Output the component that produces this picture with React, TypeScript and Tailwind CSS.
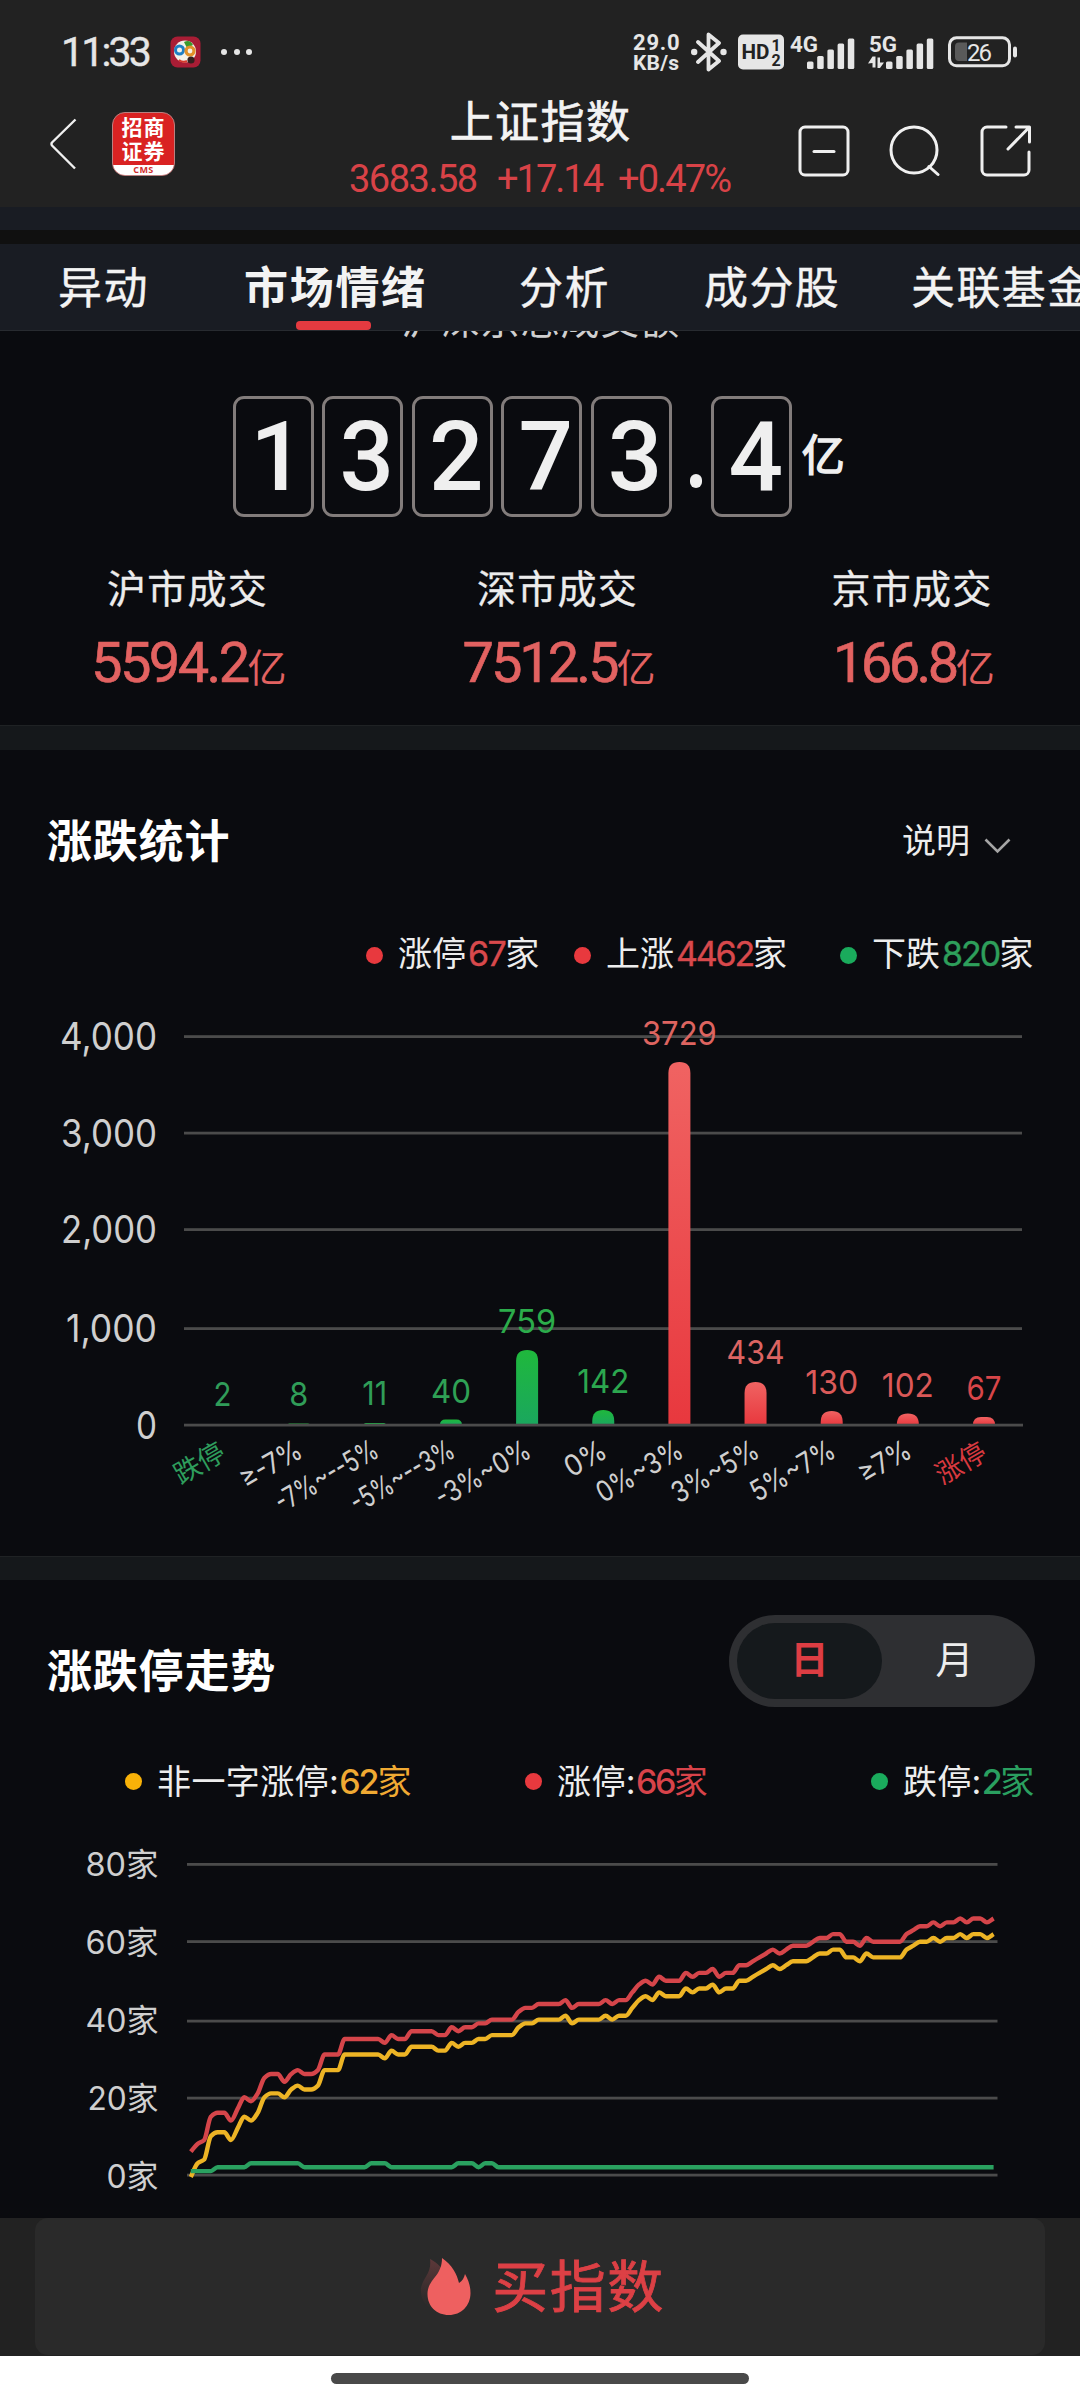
import React from "react";

const GRID = "#4b4b4b";
const LABEL = "#cfcfcf";
const CHART_FONT = "Inter, 'Noto Sans CJK SC', sans-serif";

/* ---------- status bar ---------- */

function AppBadge() {
  return (
    <svg width="31" height="32" viewBox="0 0 31 32">
      <rect x="0.5" y="0.5" width="30" height="31" rx="7" fill="#a91d35" />
      <circle cx="15" cy="15.5" r="11" fill="#f4f1e8" />
      <path d="M14 6q6-3 9 3l-6 3z" fill="#3a9a2c" />
      <circle cx="9.5" cy="14" r="4" fill="none" stroke="#1f7fc4" strokeWidth="3" />
      <circle cx="20" cy="15" r="4" fill="none" stroke="#e2912a" strokeWidth="3.2" />
      <path d="M9 24q4 3 8 1" fill="none" stroke="#d63a2d" strokeWidth="2" />
      <circle cx="21" cy="24" r="3.6" fill="#33201f" />
    </svg>
  );
}

function Bluetooth() {
  return (
    <svg width="36" height="40" viewBox="0 0 36 40" fill="none" stroke="#e6e6e6" strokeWidth="3.8">
      <path d="M7 10l21 19L17.500 37.500V2.500L28 11 7 30" strokeLinejoin="round" strokeLinecap="round" />
      <circle cx="3.200" cy="20" r="3.200" fill="#e6e6e6" stroke="none" />
      <circle cx="32.500" cy="20" r="3.200" fill="#e6e6e6" stroke="none" />
    </svg>
  );
}

function HdBadge() {
  return (
    <svg width="46" height="36" viewBox="0 0 46 36" fontFamily="Roboto, sans-serif" fontWeight="700" fill="#222">
      <rect width="46" height="35" y="0.5" rx="5" fill="#e6e6e6" />
      <text x="3.500" y="25" fontSize="20" textLength="28" lengthAdjust="spacingAndGlyphs">HD</text>
      <text x="33.500" y="17" fontSize="16">1</text>
      <text x="33.500" y="32" fontSize="16">2</text>
    </svg>
  );
}

function Signal({ label, arrows }: { label: string; arrows?: boolean }) {
  const bars = [7.5, 13, 19.5, 25.5, 30.5];
  return (
    <svg width="66" height="36" viewBox="0 0 66 36" fill="#e6e6e6">
      <text x={arrows ? 1 : 0} y="17.500" fontSize="22" fontWeight="700" fontFamily="Roboto, sans-serif" textLength="28" lengthAdjust="spacingAndGlyphs">
        {label}
      </text>
      {bars.map((h, i) => (
        <rect key={h} x={(arrows ? 18 : 17) + i * 10.2} y={35 - h} width="6.500" height={h} rx="1.500" />
      ))}
      {arrows && (
        <path d="M4.500 22.500h3v11h-3v-4.500L0 29.500zM9.500 34v-10.500h2.500V28.500h4L12 34z" />
      )}
    </svg>
  );
}

function Battery() {
  return (
    <svg width="70" height="32" viewBox="0 0 70 32">
      <rect x="1.500" y="1.800" width="60" height="28" rx="7" fill="none" stroke="#e6e6e6" strokeWidth="3" />
      <path d="M11 6.500h8v18.500h-8a4 4 0 0 1-4-4v-10.500a4 4 0 0 1 4-4z" fill="#5a5a5a" />
      <rect x="65" y="10.500" width="4" height="11" rx="2" fill="#e6e6e6" />
      <text x="31.500" y="24.500" textAnchor="middle" fontSize="24" fontFamily="Roboto, sans-serif" fill="#e6e6e6" textLength="25">26</text>
    </svg>
  );
}

function StatusBar() {
  return (
    <div className="flex h-[104px] items-center pr-[62px] pl-[61px] text-[#e6e6e6]">
      <span className="w-[109px] text-[41px] leading-none tracking-[-2.800px] [-webkit-text-stroke:0.4px]">11:33</span>
      <AppBadge />
      <div className="ml-[20px] flex gap-[6.500px]">
        <i className="size-[6px] rounded-full bg-[#e6e6e6]" />
        <i className="size-[6px] rounded-full bg-[#e6e6e6]" />
        <i className="size-[6px] rounded-full bg-[#e6e6e6]" />
      </div>
      <div className="ml-auto flex items-center">
        <div className="w-[58px] pt-[2px] text-[21px] leading-[20px] font-bold">
          <div className="text-[22px] tracking-[0.800px]">29.0</div>
          <div className="tracking-[0.200px]">KB/s</div>
        </div>
        <Bluetooth />
        <div className="ml-[11px]"><HdBadge /></div>
        <div className="ml-[6px]"><Signal label="4G" /></div>
        <div className="ml-[12px]"><Signal label="5G" arrows /></div>
        <div className="ml-[14px]"><Battery /></div>
      </div>
    </div>
  );
}

/* ---------- title bar ---------- */

function BrokerLogo() {
  return (
    <div className="flex h-[64px] w-[63px] flex-col overflow-hidden rounded-[13px] border border-[#b98080] bg-[#d92222] text-white">
      <div className="flex h-[52px] flex-col items-center justify-center pt-px text-[21px] leading-[24px] font-bold tracking-[1px]">
        <div>招商</div>
        <div>证券</div>
      </div>
      <div className="flex flex-1 items-center justify-center bg-white pb-px font-['Open_Sans'] text-[9px] leading-none font-bold tracking-[0.4px] text-[#d03030]">CMS</div>
    </div>
  );
}

function TitleBar() {
  return (
    <div className="grid h-[103px] grid-cols-[340px_401px_339px]">
      <div className="flex pt-[8px] pl-[50px]">
        <svg className="mt-[6px]" width="27" height="52" viewBox="0 0 27 52" fill="none" stroke="#f0f0f0" strokeWidth="2.400" strokeLinejoin="round">
          <path d="M25.500 1.500L2 24.500q-1 1.500 0 3L25 50.500" />
        </svg>
        <div className="ml-[35px]"><BrokerLogo /></div>
      </div>
      <div className="flex flex-col items-center">
        <h1 className="-mt-[9px] text-[44px] leading-[56px] tracking-[1.400px] text-[#f3f3f3] [-webkit-text-stroke:0.7px]">上证指数</h1>
        <div className="mt-[8px] flex text-[38px] leading-[40px] text-[#d84247]">
          <span className="w-[148px] tracking-[-1.500px]">3683.58</span>
          <span className="w-[121px] tracking-[-2px]">+17.14</span>
          <span className="w-[114px] tracking-[-1.900px]">+0.47%</span>
        </div>
      </div>
      <div className="flex pt-[21px] pl-[57px]">
        <svg width="52" height="52" viewBox="0 0 52 52" fill="none" stroke="#f0f0f0" strokeWidth="3">
          <rect x="2" y="2" width="48" height="48" rx="5" />
          <path d="M16 26.500h20" strokeLinecap="round" />
        </svg>
        <svg className="ml-[38px]" width="52" height="52" viewBox="0 0 52 52" fill="none" stroke="#f0f0f0" strokeWidth="3">
          <circle cx="26" cy="25" r="23" />
          <path d="M41 41.500l9 8" strokeLinecap="round" />
        </svg>
        <svg className="ml-[40px]" width="52" height="52" viewBox="0 0 52 52" fill="none" stroke="#f0f0f0" strokeWidth="3" strokeLinecap="round">
          <path d="M26 2H7a5 5 0 0 0-5 5v38a5 5 0 0 0 5 5h37a5 5 0 0 0 5-5V27" />
          <path d="M36 2h13.500v15M48.500 3L28 24" strokeLinejoin="round" />
        </svg>
      </div>
    </div>
  );
}

/* ---------- tabs ---------- */

function Tabs() {
  return (
    <nav className="flex h-[87px] overflow-hidden border-b border-[#282b30] bg-[#191c23] pt-[14px] pl-[58px] text-[44px] leading-[60px] tracking-[1.400px] whitespace-nowrap text-[#f3f3f3]">
      <span className="w-[186px] shrink-0 [-webkit-text-stroke:0.4px]">异动</span>
      <span className="flex w-[275px] shrink-0 flex-col font-bold tracking-[1.700px]">
        市场情绪
        <i className="mt-[3px] ml-[52px] h-[9px] w-[75px] rounded-[4px] bg-[#e53a40]" />
      </span>
      <span className="w-[185px] shrink-0 [-webkit-text-stroke:0.4px]">分析</span>
      <span className="w-[207px] shrink-0 [-webkit-text-stroke:0.4px]">成分股</span>
      <span className="shrink-0 [-webkit-text-stroke:0.4px]">关联基金</span>
    </nav>
  );
}

/* ---------- turnover ---------- */

function DigitBox({ d }: { d: string }) {
  return (
    <span className="flex h-[121px] w-[81px] items-center justify-center rounded-[11px] border-[3px] border-[#827c7b] pl-[8px] font-['Roboto'] text-[96px] leading-none font-medium">
      {d}
    </span>
  );
}

function Market({ name, value, className }: { name: string; value: string; className: string }) {
  return (
    <div className={`flex shrink-0 flex-col items-center ${className}`}>
      <div className="text-[39px] leading-[48px] tracking-[1.200px] text-[#ececec] [-webkit-text-stroke:0.3px]">{name}</div>
      <div className="mt-[25px] font-['Roboto','Noto_Sans_CJK_SC'] text-[56px] leading-[50px] whitespace-nowrap text-[#e26261] [-webkit-text-stroke:0.6px]">
        {value}
        <span className="text-[39px] [-webkit-text-stroke:0]">亿</span>
      </div>
    </div>
  );
}

function Turnover() {
  return (
    <section className="h-[394px]">
      <div className="h-[12px] overflow-hidden">
        <p className="-mt-[31px] pl-[1px] text-center text-[39px] leading-[40px] tracking-[0.800px] text-[#cfcfcf]">沪深京总成交额</p>
      </div>
      <div className="mt-[53px] flex gap-[8.400px] pl-[233px] text-[#efefef]">
        <DigitBox d="1" />
        <DigitBox d="3" />
        <DigitBox d="2" />
        <DigitBox d="7" />
        <DigitBox d="3" />
        <span className="flex w-[23px] items-end justify-center pb-[29px] pl-[9px]">
          <i className="h-[14px] w-[12px] rounded-full bg-[#efefef]" />
        </span>
        <DigitBox d="4" />
        <span className="pt-[34px] pl-[1px] text-[43px] leading-[50px] [-webkit-text-stroke:1.5px]">亿</span>
      </div>
      <div className="mt-[48px] flex">
        <Market name="沪市成交" value="5594.2" className="w-[375px] tracking-[-2.600px]" />
        <Market name="深市成交" value="7512.5" className="w-[365px] tracking-[-3px]" />
        <Market name="京市成交" value="166.8" className="w-[344px] tracking-[-3.600px]" />
      </div>
    </section>
  );
}

const Divider = ({ className }: { className: string }) => <div className={`border-t border-[#1f2224] bg-[#15181b] ${className}`} />;

/* ---------- up / down distribution ---------- */

type Bar = { label: string; value: number; top: number; base: number; w: number; len: number; color: string; axis?: string };

const bars: Bar[] = [
  { label: "跌停", value: 2, top: 1424, base: 1405.5, w: 18, len: 54, color: "#309c59", axis: "#2e9d5c" },
  { label: "≥-7%", value: 8, top: 1423.5, base: 1405.5, w: 19, len: 67, color: "#309d58" },
  { label: "-7%~--5%", value: 11, top: 1423, base: 1404.5, w: 25, len: 114, color: "#309d58" },
  { label: "-5%~--3%", value: 40, top: 1419.5, base: 1402.5, w: 40, len: 115, color: "#2fa155" },
  { label: "-3%~0%", value: 759, top: 1350, base: 1333, w: 58, len: 105, color: "#2cac4b" },
  { label: "0%", value: 142, top: 1410, base: 1393, w: 52, len: 44, color: "#2ca74f" },
  { label: "0%~3%", value: 3729, top: 1062, base: 1044.5, w: 75, len: 95, color: "#dd6460" },
  { label: "3%~5%", value: 434, top: 1382, base: 1364, w: 58, len: 96, color: "#dc6462" },
  { label: "5%~7%", value: 130, top: 1411, base: 1394, w: 53, len: 93, color: "#db5a59" },
  { label: "≥7%", value: 102, top: 1413.5, base: 1397, w: 52, len: 56, color: "#da5857" },
  { label: "涨停", value: 67, top: 1417, base: 1400, w: 35, len: 54, color: "#d84649", axis: "#d8393f" },
];

function barPath(cx: number, top: number, bottom: number) {
  const r = Math.min(11, bottom - top);
  return `M${cx - 11} ${bottom}V${top + r}q0 ${-r} ${r} ${-r}H${cx + 11 - r}q${r} 0 ${r} ${r}V${bottom}z`;
}

function Distribution() {
  const ticks: [string, number, number][] = [
    ["4,000", 1036.5, 97],
    ["3,000", 1133, 96],
    ["2,000", 1229.5, 96],
    ["1,000", 1328.5, 91],
    ["0", 1425, 21],
  ];
  return (
    <svg className="block" width="1080" height="578" viewBox="0 978 1080 578" fontFamily={CHART_FONT}>
      <defs>
        <linearGradient id="up" x1="0" y1="0" x2="0" y2="1">
          <stop offset="0" stopColor="#f06362" />
          <stop offset="1" stopColor="#e8383e" />
        </linearGradient>
        <linearGradient id="down" x1="0" y1="0" x2="0" y2="1">
          <stop offset="0" stopColor="#1fb83c" />
          <stop offset="1" stopColor="#1aa75e" />
        </linearGradient>
      </defs>
      {ticks.map(([t, y, w]) => (
        <g key={t}>
          {t !== "0" && <rect x="184" y={y - 1.3} width="838" height="2.800" fill={GRID} />}
          <text x="157" y={y + 13.5} textAnchor="end" fontSize="38" fill={LABEL} textLength={w} lengthAdjust="spacingAndGlyphs">{t}</text>
        </g>
      ))}
      {bars.map((b, i) => {
        const cx = 222.5 + i * 76.15;
        const cjk = !!b.axis;
        return (
          <g key={b.label}>
            <path d={barPath(cx, b.top, 1425)} fill={i < 6 ? "url(#down)" : "url(#up)"} />
            <text x={cx} y={b.base} textAnchor="middle" fontSize="33" fill={b.color} textLength={b.w} lengthAdjust="spacingAndGlyphs">{b.value}</text>
            <text
              transform={`translate(${cx + (cjk ? 5 : 6)} ${cjk ? 1458 : 1456}) rotate(-30)`}
              textAnchor="end"
              fontSize={cjk ? 27 : 29}
              fill={b.axis ?? LABEL}
              textLength={b.len}
              lengthAdjust="spacingAndGlyphs"
            >
              {b.label}
            </text>
          </g>
        );
      })}
      <rect x="184" y="1423.700" width="839" height="2.800" fill={GRID} />
    </svg>
  );
}

function Dot({ className }: { className: string }) {
  return <i className={`size-[17px] shrink-0 rounded-full ${className}`} />;
}

function Stats() {
  return (
    <section>
      <div className="flex h-[180px] items-center pr-[69px] pl-[47px]">
        <h2 className="pt-[2px] text-[45px] leading-none font-bold tracking-[0.800px] text-white">涨跌统计</h2>
        <span className="ml-auto pt-[2px] text-[34px] leading-none text-[#ededed]">说明</span>
        <svg className="mt-[12px] ml-[14px]" width="27" height="16" viewBox="0 0 27 16" fill="none" stroke="#a5a5a5" strokeWidth="2.600">
          <path d="M1.500 1.500l12 12 12-12" />
        </svg>
      </div>
      <div className="flex h-[48px] items-center pl-[366px] text-[34px] leading-[48px] whitespace-nowrap text-[#ededed]">
        <Dot className="mt-[2px] bg-[#e8393e]" />
        <span className="ml-[15px] w-[176px]">涨停<b className="ml-[2px] font-normal tracking-[-1.500px] text-[#d8494c] [-webkit-text-stroke:0.4px]">67</b>家</span>
        <Dot className="mt-[2px] bg-[#e8393e]" />
        <span className="ml-[15px] w-[234px]">上涨<b className="ml-[2px] font-normal tracking-[-2.200px] text-[#d8494c] [-webkit-text-stroke:0.4px]">4462</b>家</span>
        <Dot className="mt-[2px] bg-[#1aab5c]" />
        <span className="ml-[15px]">下跌<b className="ml-[2px] font-normal tracking-[-2px] text-[#2e9f5b] [-webkit-text-stroke:0.4px]">820</b>家</span>
      </div>
      <Distribution />
    </section>
  );
}

/* ---------- limit-up / limit-down trend ---------- */

const limitUp = [
  6, 8, 9, 15, 16, 16, 14, 17, 20, 19, 21, 25, 26, 26, 24, 26, 27, 26, 26, 27, 31, 31, 31, 35, 35, 35, 35, 35, 35, 34,
  36, 35, 35, 37, 37, 37, 37, 36, 36, 38, 37, 38, 38, 39, 39, 40, 40, 40, 40, 42, 43, 43, 44, 44, 44, 44, 45, 43, 44, 44,
  44, 44, 45, 44, 45, 45, 47, 49, 50, 49, 51, 50, 50, 50, 52, 51, 52, 52, 53, 51, 52, 52, 54, 54, 55, 56, 57, 58, 57, 58,
  59, 59, 59, 60, 61, 61, 62, 62, 60, 60, 59, 61, 60, 60, 60, 60, 60, 62, 63, 64, 64, 65, 64, 65, 65, 66, 65, 66, 66, 65, 66,
];
const openStart = [-0.5, 3, 4, 10, 11, 11, 9, 12, 15, 14, 16, 20, 21, 21, 20, 22];
const opened = limitUp.map((v, i) => openStart[i] ?? v - 4);
const limitDown = limitUp.map((_, i) => {
  if (i < 4) return 1;
  if ((i > 8 && i < 17) || (i > 26 && i < 30) || (i > 39 && i < 43) || i === 44 || i === 45) return 3;
  return 2;
});

/* Monotone cubic interpolation through evenly spaced samples. */
function linePath(data: number[]) {
  const dx = 6.69;
  const x = (i: number) => 190.8 + i * dx;
  const y = data.map((v) => 2175 - v * 3.886);
  const m = y.map((_, i) => {
    if (i === 0) return y[1] - y[0];
    if (i === y.length - 1) return y[i] - y[i - 1];
    const a = y[i] - y[i - 1];
    const b = y[i + 1] - y[i];
    return a * b <= 0 ? 0 : (2 * a * b) / (a + b);
  });
  let d = `M${x(0)} ${y[0]}`;
  for (let i = 1; i < y.length; i++) {
    d += `C${(x(i - 1) + dx / 3).toFixed(1)} ${(y[i - 1] + m[i - 1] / 3).toFixed(1)} ${(x(i) - dx / 3).toFixed(1)} ${(y[i] - m[i] / 3).toFixed(1)} ${x(i).toFixed(1)} ${y[i].toFixed(1)}`;
  }
  return d;
}

function TrendChart() {
  const ticks: [string, number, number][] = [
    ["80家", 1864.3, 73],
    ["60家", 1941.5, 73],
    ["40家", 2021, 73],
    ["20家", 2098, 71],
    ["0家", 2175, 52],
  ];
  return (
    <svg className="block" width="1080" height="413" viewBox="0 1805 1080 413" fontFamily={CHART_FONT}>
      {ticks.map(([t, y, w], i) => (
        <g key={t}>
          <rect x="187" y={y - 1.3} width="810.500" height="2.800" fill={GRID} />
          <text x="158.500" y={1875.5 + i * 78} textAnchor="end" fontSize="32" fill={LABEL} textLength={w} lengthAdjust="spacingAndGlyphs">{t}</text>
        </g>
      ))}
      <g fill="none" strokeWidth="4.400" strokeLinejoin="round">
        <path d={linePath(limitUp)} stroke="#d5454a" />
        <path d={linePath(opened)} stroke="#edb425" />
        <path d={linePath(limitDown)} stroke="#2aa160" />
      </g>
    </svg>
  );
}

function Trend() {
  return (
    <section>
      <div className="flex h-[127px] pt-[35px] pr-[45px] pl-[47px]">
        <h2 className="mt-[34px] text-[45px] leading-none font-bold tracking-[0.800px] text-white">涨跌停走势</h2>
        <div className="ml-auto flex h-[92px] w-[306px] rounded-full bg-[#2e2f32] p-[8px] text-[38px] leading-none text-[#ededed]">
          <span className="flex w-[145px] items-center justify-center rounded-full bg-[#15191c] pb-[5px] font-bold text-[#dd3d43]">日</span>
          <span className="flex flex-1 items-center justify-center pb-[5px]">月</span>
        </div>
      </div>
      <div className="mt-[50px] flex h-[48px] items-center pl-[125px] text-[34px] leading-[48px] whitespace-nowrap text-[#ededed]">
        <Dot className="bg-[#f9b208]" />
        <span className="ml-[15px] w-[368px] pt-px tracking-[0.400px]">非一字涨停:<b className="font-medium tracking-[-2px] text-[#f0aa33]">62</b><b className="font-normal text-[#f0aa33]">家</b></span>
        <Dot className="bg-[#e8393e]" />
        <span className="ml-[15px] w-[314px] pt-px tracking-[0.400px]">涨停:<b className="font-medium tracking-[-2.500px] text-[#d8434a]">66</b><b className="font-normal text-[#d8434a]">家</b></span>
        <Dot className="bg-[#1aab5c]" />
        <span className="ml-[15px] pt-px tracking-[0.300px]">跌停:<b className="font-medium tracking-[-2.500px] text-[#2aa060]">2</b><b className="font-normal text-[#2aa060]">家</b></span>
      </div>
      <TrendChart />
    </section>
  );
}

/* ---------- bottom bar ---------- */

function Flame() {
  return (
    <svg width="52" height="60" viewBox="0 0 52 60">
      <defs>
        <linearGradient id="shade" x1="0" y1="0" x2="0" y2="1">
          <stop offset="0" stopColor="#5e3839" />
          <stop offset="0.7" stopColor="#332c2c" />
          <stop offset="1" stopColor="#2a2a2a" />
        </linearGradient>
      </defs>
      <path d="M10 2C20 7 31 20 31 30L22 54C6 54 0 42 1 31C3 20 12 16 10 2z" fill="url(#shade)" />
      <path d="M22 1C32 8 37 17 39 26C42.500 24 44 21 45 17C49 24 50.500 30 50.500 36C50.500 49 41 58 29 58C16 58 7.500 49 7.500 37C7.500 22 22 20 22 1z" fill="#ee6060" />
    </svg>
  );
}

export default function App() {
  return (
    <div className="flex h-[2400px] w-[1080px] flex-col overflow-hidden bg-[#0a0b0f] font-['Inter','Noto_Sans_CJK_SC',sans-serif]">
      <header className="h-[207px] shrink-0 bg-[#222222] font-['Roboto','Noto_Sans_CJK_SC',sans-serif]">
        <StatusBar />
        <TitleBar />
      </header>
      <div className="h-[23px] shrink-0 bg-[#191c23]" />
      <div className="h-[14px] shrink-0 bg-[#101010]" />
      <Tabs />
      <main className="h-[1887px] shrink-0">
        <Turnover />
        <Divider className="h-[25px]" />
        <Stats />
        <Divider className="h-[24px]" />
        <Trend />
      </main>
      <footer className="h-[138px] shrink-0 bg-[#222222] px-[35px]">
        <button className="flex h-[137px] w-full items-center justify-center rounded-[13px] bg-[#2a2a2a] pl-[5px] text-[56px] text-[#dc4045]">
          <Flame />
          <span className="ml-[20px] tracking-[1.500px] [-webkit-text-stroke:0.8px]">买指数</span>
        </button>
      </footer>
      <div className="flex flex-1 justify-center bg-white pt-[17px]">
        <i className="h-[11px] w-[418px] rounded-full bg-[#494949]" />
      </div>
    </div>
  );
}
